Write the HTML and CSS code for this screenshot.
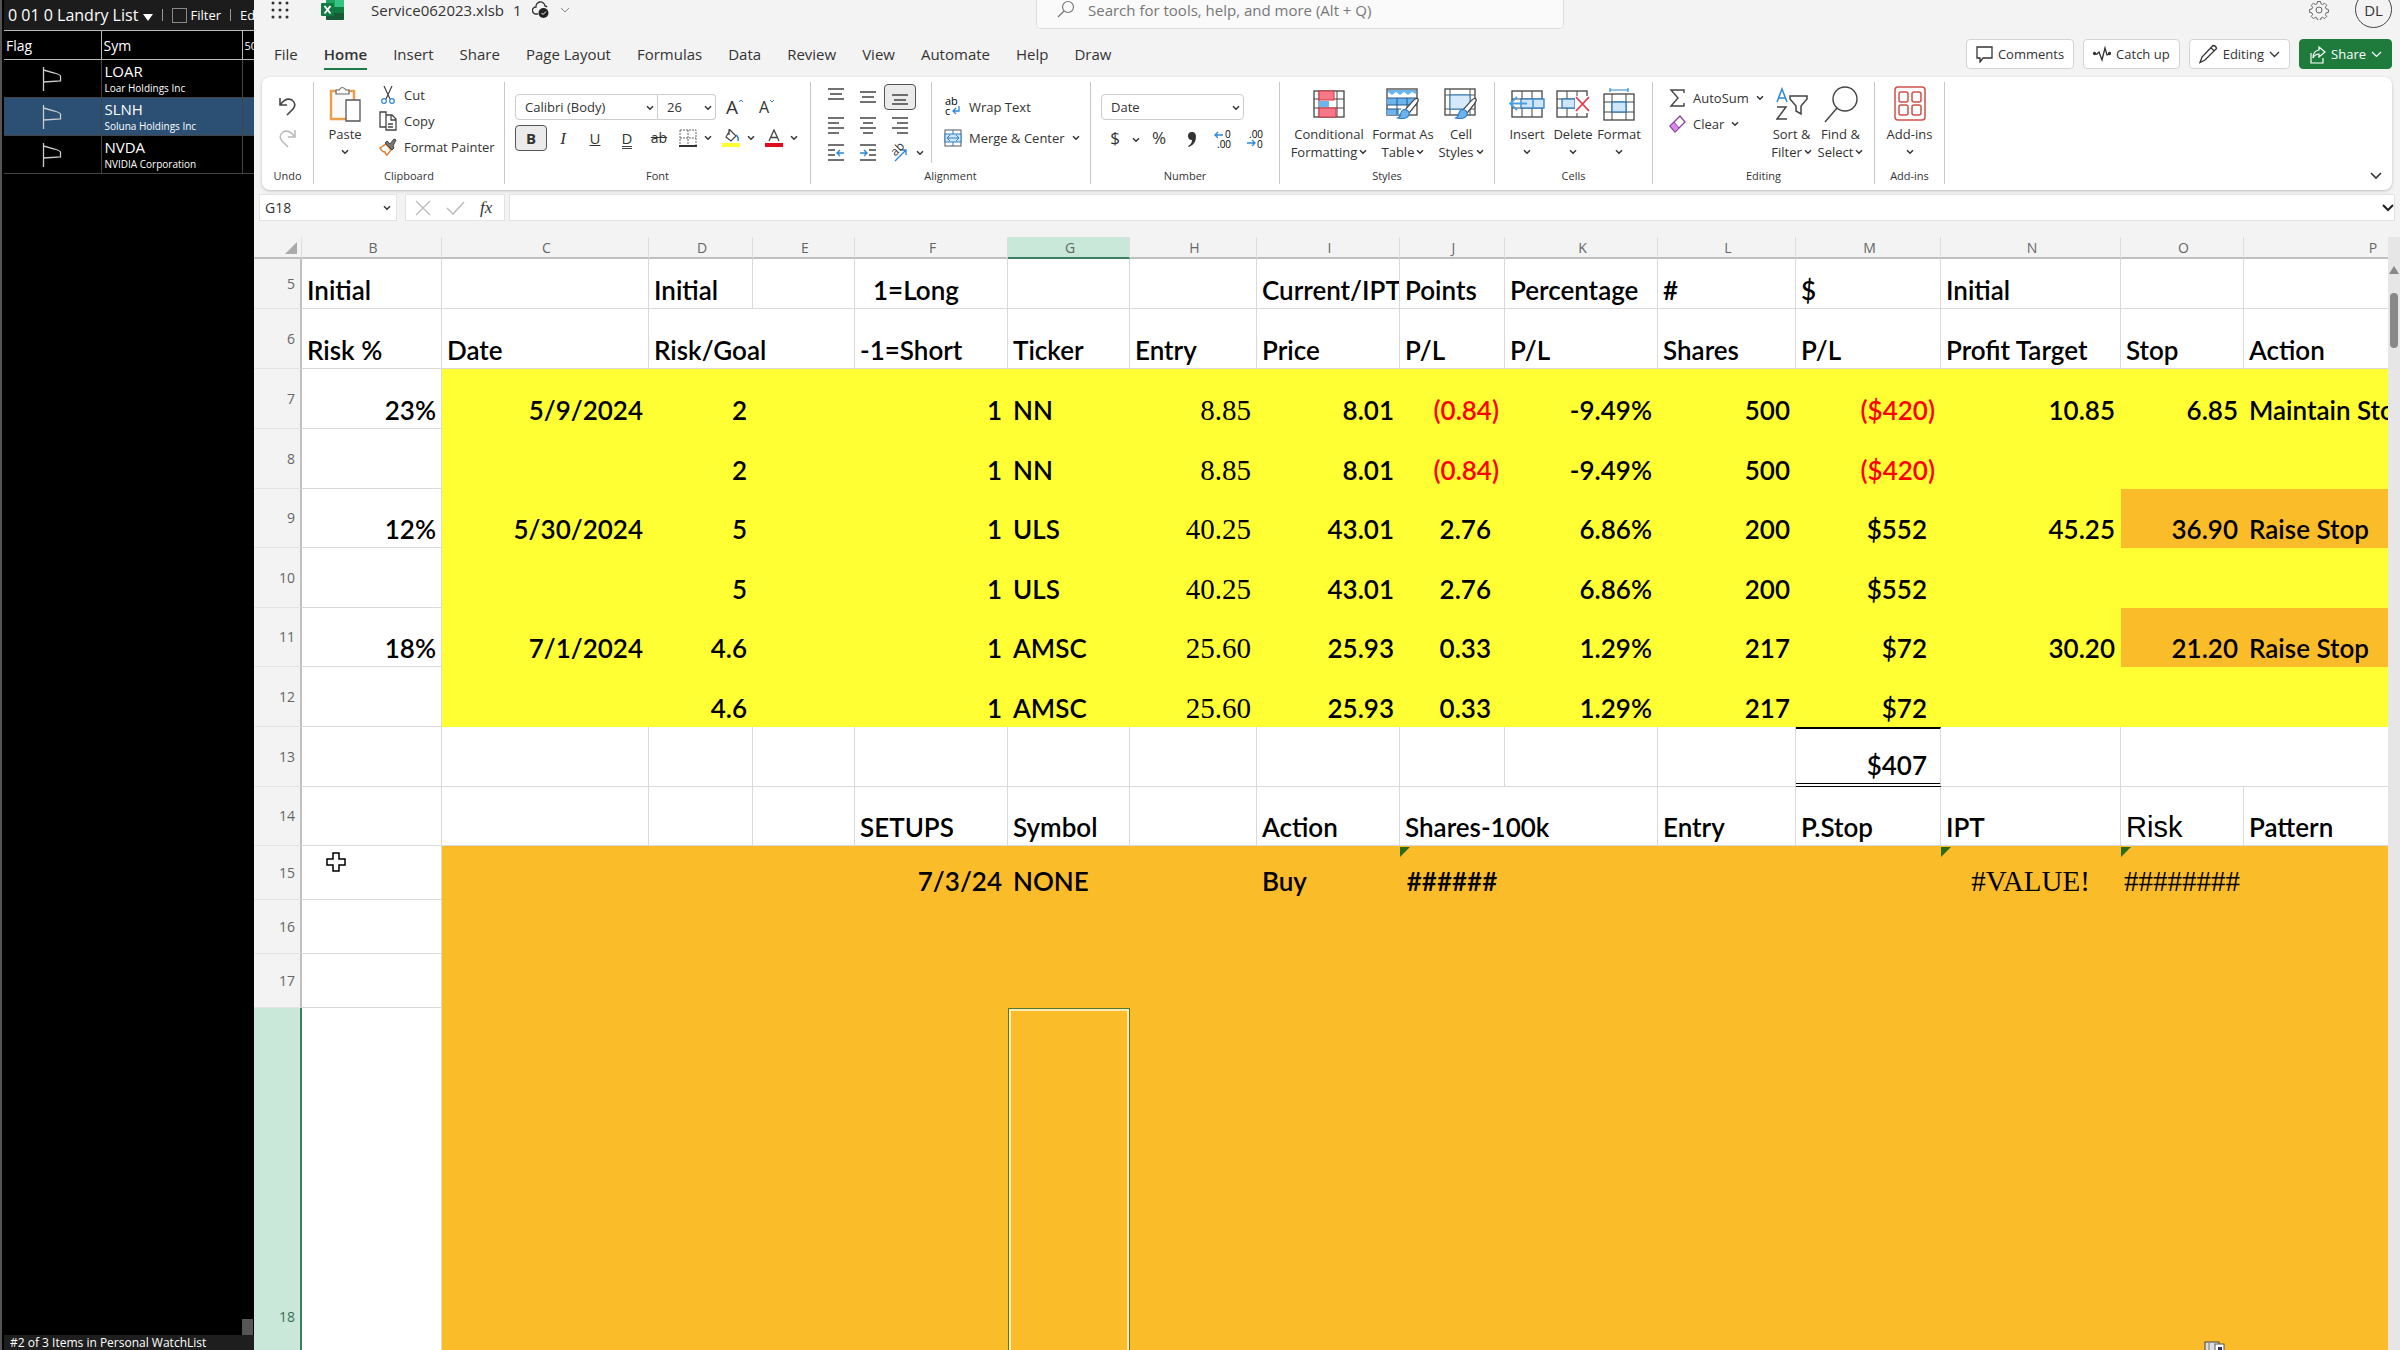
FILE: index.html
```html
<!DOCTYPE html>
<html lang="en">
<head>
    <meta charset="UTF-8">
    <meta name="viewport" content="width=device-width, initial-scale=1.0">
    <title>Service062023.xlsb</title>
    <link rel="stylesheet" href="styles.css">
</head>
<body>
    <!-- shared icons -->
    <svg class="defs">
        <symbol id="chev" viewBox="0 0 8 6"><path d="M1 1.2l3 3 3-3" fill="none" stroke="#333" stroke-width="1.5"/></symbol>
        <symbol id="flag" viewBox="0 0 20 26"><path d="M1.5 1v24M1.5 4l11 3q6 2 6 3v5l-17 1" fill="none" stroke="#ccc" stroke-width="1.3"/></symbol>
        <symbol id="brush" viewBox="0 0 22 22"><path d="M20 1.5q2 1-1 5l-7 9-4-3 8-9q3-3 4-2z" fill="#fff" stroke="#444" stroke-width="1.2"/><path d="M8 12q5 1 4 5-2 5-11 3 3-1 3-4 1-4 4-4z" fill="#6cb4ee" stroke="#2b7bc0"/></symbol>
    </svg>

    <aside class="watch">
        <div class="watch-bar">
            <button class="list-name">0 01 0 Landry List <svg width="10" height="7"><path d="M0 0h10l-5 7z" fill="#fff"/></svg></button>
            <span class="sep"></span>
            <label class="filter"><input type="checkbox"> Filter</label>
            <span class="sep"></span>
            <button>Edit</button>
        </div>
        <table class="watch-table">
            <colgroup><col class="w-flag"><col class="w-sym"><col class="w-fifty"></colgroup>
            <thead>
                <tr><th>Flag</th><th>Sym</th><th class="small">50</th></tr>
            </thead>
            <tbody>
                <tr><td class="flag"><svg><use href="#flag"/></svg></td><td>LOAR<small>Loar Holdings Inc</small></td><td></td></tr>
                <tr class="active"><td class="flag"><svg><use href="#flag"/></svg></td><td>SLNH<small>Soluna Holdings Inc</small></td><td></td></tr>
                <tr><td class="flag"><svg><use href="#flag"/></svg></td><td>NVDA<small>NVIDIA Corporation</small></td><td></td></tr>
            </tbody>
        </table>
        <div class="watch-corner"></div>
        <div class="watch-status">#2 of 3 Items in Personal WatchList</div>
    </aside>

    <main class="excel">
        <header class="title">
            <div class="title-left">
                <svg class="waffle" width="18" height="18" fill="#333"><circle cx="2" cy="2" r="1.5"/><circle cx="9" cy="2" r="1.5"/><circle cx="16" cy="2" r="1.5"/><circle cx="2" cy="9" r="1.5"/><circle cx="9" cy="9" r="1.5"/><circle cx="16" cy="9" r="1.5"/><circle cx="2" cy="16" r="1.5"/><circle cx="9" cy="16" r="1.5"/><circle cx="16" cy="16" r="1.5"/></svg>
                <svg class="logo" width="24" height="22"><rect x="5" y="0" width="18" height="21" rx="2" fill="#21a366"/><rect x="14" y="0" width="9" height="8" fill="#33c481"/><rect x="5" y="8" width="18" height="6" fill="#107c41"/><rect x="5" y="14" width="18" height="7" rx="1" fill="#185c37"/><rect x="0" y="4" width="13" height="13" rx="1" fill="#107c41"/><path d="M3.500 7l6 7.500M9.500 7l-6 7.500" stroke="#fff" stroke-width="2"/></svg>
                <span class="file-name">Service062023.xlsb</span>
                <span>1</span>
                <svg class="cloud" width="18" height="18"><path d="M6 13H4a3.500 3.500 0 0 1 0-7 4.500 4.500 0 0 1 9-1 3 3 0 0 1 2 1" fill="none" stroke="#333" stroke-width="1.3"/><circle cx="11.500" cy="12" r="5" fill="#222"/><path d="M9.500 12l1.500 1.500 3-3" fill="none" stroke="#fff"/></svg>
                <svg width="10" height="6"><path d="M1 1l4 4 4-4" fill="none" stroke="#888"/></svg>
            </div>
            <label class="search">
                <svg width="18" height="18"><circle cx="11" cy="7" r="5.500" fill="none" stroke="#777" stroke-width="1.2"/><path d="M7 11l-6 6" stroke="#777" stroke-width="1.2"/></svg>
                <input type="text" placeholder="Search for tools, help, and more (Alt + Q)">
            </label>
            <div class="title-right">
                <svg width="20" height="20" viewBox="0 0 20 20" fill="none" stroke="#666"><circle cx="10" cy="10" r="3"/><path d="M8.500 1.500h3l.5 2.300 1.600.7 2-1.300 2.100 2.100-1.300 2 .7 1.600 2.300.5v3l-2.300.5-.7 1.600 1.300 2-2.100 2.100-2-1.300-1.600.7-.5 2.300h-3l-.5-2.300-1.600-.7-2 1.300-2.100-2.100 1.300-2-.7-1.600-2.300-.5v-3l2.300-.5.7-1.600-1.300-2 2.100-2.100 2 1.300 1.600-.7z"/></svg>
                <button class="avatar">DL</button>
            </div>
        </header>

        <nav class="tabs">
            <button>File</button>
            <button class="current">Home</button>
            <button>Insert</button>
            <button>Share</button>
            <button>Page Layout</button>
            <button>Formulas</button>
            <button>Data</button>
            <button>Review</button>
            <button>View</button>
            <button>Automate</button>
            <button>Help</button>
            <button>Draw</button>
            <div class="actions">
                <button><svg width="17" height="18" fill="none" stroke="#333" stroke-width="1.300"><path d="M1 2h15v11H7l-3 4v-4H1z"/></svg>Comments</button>
                <button><svg width="18" height="16" fill="none" stroke="#333" stroke-width="1.300"><path d="M1 8h3l2-2 3 8 3-12 2 7 3-1"/><circle cx="1.500" cy="7.500" r="1" fill="#333"/><circle cx="16.500" cy="7.500" r="1" fill="#333"/></svg>Catch up</button>
                <button><svg width="19" height="20" fill="none" stroke="#333" stroke-width="1.300"><path d="M14 1.500q3 0 3.500 3L6 16l-5 2.500L3 13zM12 4l3.500 3"/></svg>Editing<svg width="11" height="7"><path d="M1 1l4.500 4.500L10 1" fill="none" stroke="#333" stroke-width="1.300"/></svg></button>
                <button class="share"><svg width="17" height="19" fill="none" stroke="#fff" stroke-width="1.200"><path d="M2 8v10h12v-5M10 2l6 5-6 5V9q-4 0-6 4 0-7 6-8z"/></svg>Share<svg width="11" height="7"><path d="M1 1l4.500 4.500L10 1" fill="none" stroke="#fff" stroke-width="1.200"/></svg></button>
            </div>
        </nav>

        <section class="ribbon">
            <div class="group g-undo">
                <div class="group-body">
                    <button aria-label="Undo"><svg width="19" height="20" fill="none" stroke="#444" stroke-width="1.600"><path d="M2 2v7h7M2.500 8.500Q8 1 14 4q5 4 1 9l-6 6"/></svg></button>
                    <button aria-label="Redo"><svg width="19" height="20" fill="none" stroke="#bbb" stroke-width="1.500"><path d="M17 2v7h-7M16.500 8.500Q11 1 5 4q-5 4-1 9l6 6"/></svg></button>
                </div>
                <h2>Undo</h2>
            </div>

            <div class="group g-clip">
                <div class="group-body">
                    <button class="big"><span class="ico"><svg width="32" height="36" fill="none"><rect x="2" y="5" width="23" height="28" stroke="#e8a04a" stroke-width="2.500" fill="#fafafa"/><path d="M7 8V4h3q3-5 7 0h3v4z" fill="#fff" stroke="#666" stroke-width="1.200"/><path d="M17 14h14v21H17z" fill="#fff" stroke="#555" stroke-width="1.300"/></svg></span><span>Paste</span><svg class="chev"><use href="#chev"/></svg></button>
                    <div class="list">
                        <button><svg width="18" height="20" fill="none" stroke="#444" stroke-width="1.200"><path d="M5 1l6 13M13 1L7 14"/><circle cx="5" cy="16" r="2.300" stroke="#2b88d8"/><circle cx="13" cy="16" r="2.300" stroke="#2b88d8"/></svg>Cut</button>
                        <button><svg width="18" height="20" fill="none" stroke="#444" stroke-width="1.300"><path d="M7 16H1V1h6v3M7 4h6l4 4v11H7zM12 4v5h5M9 13h5M9 16h5"/></svg>Copy</button>
                        <button><svg width="18" height="18"><path d="M1 10l6-4 5 6-4 5q-2-1-2-3-3 0-5-4z" fill="#fff" stroke="#e07b2c" stroke-width="1.500"/><path d="M6 5l2-2 3 3 4-5 2 1-3 6 1 2-2 2z" fill="#777" stroke="#444"/></svg>Format Painter</button>
                    </div>
                </div>
                <h2>Clipboard</h2>
            </div>

            <div class="group g-font">
                <div class="group-body rows">
                    <div class="row">
                        <span class="select"><select aria-label="Font"><option>Calibri (Body)</option></select><svg class="chev"><use href="#chev"/></svg></span>
                        <span class="select size"><select aria-label="Font size"><option>26</option></select><svg class="chev"><use href="#chev"/></svg></span>
                        <button class="tool grow">A<svg width="6" height="4"><path d="M1 3l2-2 2 2" fill="none" stroke="#2b7bc0"/></svg></button>
                        <button class="tool shrink">A<svg width="6" height="4"><path d="M1 1l2 2 2-2" fill="none" stroke="#2b7bc0"/></svg></button>
                    </div>
                    <div class="row">
                        <button class="tool pressed"><b>B</b></button>
                        <button class="tool"><i>I</i></button>
                        <button class="tool"><u>U</u></button>
                        <button class="tool dbl"><span>D</span></button>
                        <button class="tool strike"><s>ab</s></button>
                        <button class="split first" aria-label="Borders"><svg width="18" height="18" fill="none"><path d="M1 1h16v15M1 1v15M9 1v15M1 9h16" stroke="#666" stroke-dasharray="2 1"/><path d="M0 17h18" stroke="#333" stroke-width="2"/></svg><svg class="chev"><use href="#chev"/></svg></button>
                        <button class="split" aria-label="Fill colour"><svg width="18" height="18"><path d="M8 1l6 6-5 5-5-4zM7 0v6" fill="#fff" stroke="#444" stroke-width="1.200"/><path d="M14 6q3 2 2 6" fill="none" stroke="#2b7bc0" stroke-width="1.500"/><rect y="14" width="18" height="4" fill="#ffff33"/></svg><svg class="chev"><use href="#chev"/></svg></button>
                        <button class="split" aria-label="Font colour"><svg width="18" height="18"><path d="M4 12L9 1l5 11M6 8.500h6" fill="none" stroke="#444" stroke-width="1.300"/><rect y="14" width="18" height="4" fill="#e00b1c"/></svg><svg class="chev"><use href="#chev"/></svg></button>
                    </div>
                </div>
                <h2>Font</h2>
            </div>

            <div class="group g-align">
                <div class="group-body">
                    <div class="align-grid">
                        <button aria-label="Top align"><svg><path d="M1 1h16M3 6h12M1 11h16"/></svg></button>
                        <button aria-label="Middle align"><svg><path d="M1 4h16M3 9h12M1 14h16"/></svg></button>
                        <button aria-label="Bottom align" class="pressed"><svg><path d="M1 7h16M3 12h12M1 16h16"/></svg></button>
                        <button aria-label="Align left"><svg><path d="M1 2h16M1 7h11M1 12h16M1 17h11"/></svg></button>
                        <button aria-label="Center"><svg><path d="M1 2h16M4 7h10M1 12h16M4 17h10"/></svg></button>
                        <button aria-label="Align right"><svg><path d="M1 2h16M6 7h11M1 12h16M6 17h11"/></svg></button>
                        <button aria-label="Decrease indent"><svg><path d="M1 1h16M1 6h7M1 11h7M1 16h16"/><path class="blue" d="M17 9h-7M13 6l-3 3 3 3"/></svg></button>
                        <button aria-label="Increase indent"><svg><path d="M1 1h16M10 6h7M10 11h7M1 16h16"/><path class="blue" d="M1 9h7M5 6l3 3-3 3"/></svg></button>
                        <button aria-label="Orientation" class="orient"><span>ab</span><svg><path class="blue" d="M4 17L15 6M10 6h5v5"/></svg></button>
                    </div>
                    <svg class="chev orient-chev"><use href="#chev"/></svg>
                    <div class="list wrap-list">
                        <button><svg class="glyphs" width="18" height="20"><text x="1" y="8" font-size="11">ab</text><text x="1" y="18" font-size="11">c</text><path d="M15 9v5H9M12 11l-3 3 3 3" fill="none" stroke="#2b88d8" stroke-width="1.300"/></svg>Wrap Text</button>
                        <button><svg width="18" height="18"><rect x="1" y="1" width="16" height="16" fill="#fff" stroke="#555"/><rect x="1" y="5" width="16" height="8" fill="#cfe6fa" stroke="#2b7bc0"/><path d="M3 9h12M6 6L3 9l3 3M12 6l3 3-3 3M9 1v4M9 13v4" fill="none" stroke="#2b7bc0"/></svg>Merge &amp; Center<svg class="chev"><use href="#chev"/></svg></button>
                    </div>
                </div>
                <h2>Alignment</h2>
            </div>

            <div class="group g-num">
                <div class="group-body rows">
                    <div class="row">
                        <span class="select lone"><select aria-label="Number format"><option>Date</option></select><svg class="chev"><use href="#chev"/></svg></span>
                    </div>
                    <div class="row">
                        <button class="tool money">$</button>
                        <button class="caret" aria-label="Currencies"><svg class="chev"><use href="#chev"/></svg></button>
                        <button class="tool">%</button>
                        <button class="tool" aria-label="Comma style"><svg width="9" height="15"><path d="M5 0q4 0 4 5 0 7-7 10l-1-1q4-2 4-6Q1 8 1 4q0-4 4-4z" fill="#333"/></svg></button>
                        <button class="tool" aria-label="Increase decimal"><svg class="glyphs" width="18" height="18"><path d="M9 5H1M4 2L1 5l3 3" fill="none" stroke="#2b88d8" stroke-width="1.300"/><text x="11" y="8" font-size="10">0</text><text x="3" y="18" font-size="10">.00</text></svg></button>
                        <button class="tool" aria-label="Decrease decimal"><svg class="glyphs" width="18" height="18"><path d="M1 13h8M6 10l3 3-3 3" fill="none" stroke="#2b88d8" stroke-width="1.300"/><text x="3" y="8" font-size="10">.00</text><text x="11" y="18" font-size="10">0</text></svg></button>
                    </div>
                </div>
                <h2>Number</h2>
            </div>

            <div class="group g-styles">
                <div class="group-body">
                    <button class="big"><span class="ico"><svg width="32" height="28"><rect x="1" y="1" width="30" height="26" fill="#fff" stroke="#444" stroke-width="1.300"/><path d="M1 9h30M1 18h30M24 1v26M6 1v26" stroke="#444"/><rect x="6" y="1" width="15" height="9" fill="#f8788a" stroke="#d13438"/><rect x="6" y="11" width="10" height="6" fill="#6cb4ee"/><rect x="6" y="18" width="17" height="9" fill="#f8788a" stroke="#d13438"/></svg></span><span>Conditional</span><span>Formatting<svg class="chev"><use href="#chev"/></svg></span></button>
                    <button class="big wide"><span class="ico"><svg width="34" height="32"><rect x="1" y="1" width="30" height="26" fill="#fff" stroke="#444" stroke-width="1.300"/><path d="M2 2h28v4l-4-2-4 3-4-3-4 3-4-3-4 3-4-3z" fill="#6cb4ee"/><path d="M1 10h30v7H1zM1 21h12v6H1z" fill="#6cb4ee"/><path d="M1 10h30M1 17h30M1 21h14M11 10v17M21 10v11" stroke="#24588a"/><svg x="10" y="9" width="24" height="23"><use href="#brush"/></svg></svg></span><span>Format As</span><span>Table<svg class="chev"><use href="#chev"/></svg></span></button>
                    <button class="big cell"><span class="ico"><svg width="34" height="32"><rect x="1" y="1" width="30" height="26" fill="#fff" stroke="#444" stroke-width="1.300"/><path d="M1 7h30M1 21h30M6 1v26M26 1v26" stroke="#555"/><rect x="6" y="7" width="20" height="14" fill="#d5e9fb" stroke="#2b7bc0"/><svg x="10" y="9" width="24" height="23"><use href="#brush"/></svg></svg></span><span>Cell</span><span>Styles<svg class="chev"><use href="#chev"/></svg></span></button>
                </div>
                <h2>Styles</h2>
            </div>

            <div class="group g-cells">
                <div class="group-body">
                    <button class="big"><span class="ico"><svg width="36" height="28"><rect x="3" y="1" width="30" height="26" fill="#fff" stroke="#444" stroke-width="1.300"/><path d="M13 1v26M23 1v26M3 9h30M3 18h30" stroke="#444"/><rect x="12" y="9" width="23" height="9" fill="#cfe6fa" stroke="#2b7bc0" stroke-width="1.300"/><path d="M24 9v9M18 13.500H1M8 7l-7 6.500L8 20" fill="none" stroke="#4aa0e0" stroke-width="1.800"/></svg></span><span>Insert</span><svg class="chev"><use href="#chev"/></svg></button>
                    <button class="big"><span class="ico"><svg width="34" height="28"><rect x="1" y="1" width="30" height="26" fill="#fff" stroke="#444" stroke-width="1.300"/><path d="M11 1v26M21 1v26M1 9h30M1 18h30" stroke="#444"/><rect x="6" y="9" width="13" height="9" fill="#cfe6fa" stroke="#2b7bc0" stroke-width="1.300"/><path d="M19 6h14v17H19z" fill="#fff"/><path d="M20 7l13 14M33 7L20 21" stroke="#e0394f" stroke-width="1.800"/></svg></span><span>Delete</span><svg class="chev"><use href="#chev"/></svg></button>
                    <button class="big"><span class="ico"><svg width="32" height="34"><path d="M7 3h18M7 1v4M25 1v4" stroke="#2b88d8" stroke-width="1.200"/><rect x="1" y="7" width="30" height="26" fill="#fff" stroke="#444" stroke-width="1.300"/><path d="M9 7v26M23 7v26M1 15h30M1 25h30" stroke="#444"/><rect x="9" y="15" width="14" height="10" fill="#cfe6fa" stroke="#2b7bc0" stroke-width="1.300"/></svg></span><span>Format</span><svg class="chev"><use href="#chev"/></svg></button>
                </div>
                <h2>Cells</h2>
            </div>

            <div class="group g-edit">
                <div class="group-body">
                    <div class="list">
                        <button><svg width="17" height="18"><path d="M15 4V1H2l7 8-7 8h13v-3" fill="none" stroke="#444" stroke-width="1.400"/></svg>AutoSum<svg class="chev"><use href="#chev"/></svg></button>
                        <button><svg width="17" height="18"><path d="M1 11L11 1l5 6L6 17z" fill="#fff" stroke="#8a3fa0" stroke-width="1.300"/><path d="M1 11l4-4 5 6-4 4z" fill="#d98ae8" stroke="#8a3fa0"/></svg>Clear<svg class="chev"><use href="#chev"/></svg></button>
                    </div>
                    <button class="big"><span class="ico"><svg width="32" height="34" fill="none" stroke-width="1.500"><path d="M1 15L6 2l5 13M3 11h6" stroke="#2b88d8"/><path d="M1 20h9L1 32h10" stroke="#444"/><path d="M14 9h17v3l-6 7v8l-5-3v-5l-6-7z" stroke="#444"/></svg></span><span>Sort &amp;</span><span>Filter<svg class="chev"><use href="#chev"/></svg></span></button>
                    <button class="big"><span class="ico"><svg width="34" height="38" fill="none" stroke="#444" stroke-width="1.400"><circle cx="21" cy="14" r="12"/><path d="M13 23L1 37"/></svg></span><span>Find &amp;</span><span>Select<svg class="chev"><use href="#chev"/></svg></span></button>
                </div>
                <h2>Editing</h2>
            </div>

            <div class="group g-add">
                <div class="group-body">
                    <button class="big"><span class="ico"><svg width="32" height="36" fill="none" stroke="#d0504a" stroke-width="1.500"><rect x="1" y="1" width="30" height="33" rx="3"/><rect x="5" y="6" width="9" height="10" rx="2"/><rect x="18" y="6" width="9" height="10" rx="2"/><rect x="5" y="19" width="9" height="10" rx="2"/><rect x="18" y="19" width="9" height="10" rx="2"/></svg></span><span>Add-ins</span><svg class="chev"><use href="#chev"/></svg></button>
                </div>
                <h2>Add-ins</h2>
            </div>
            <button class="collapse" aria-label="Collapse ribbon"><svg width="12" height="8"><path d="M1 1l5 5 5-5" fill="none" stroke="#333" stroke-width="1.600"/></svg></button>
        </section>

        <div class="formula">
            <div class="name-box">
                <input type="text" value="G18" aria-label="Name box">
                <svg class="chev"><use href="#chev"/></svg>
            </div>
            <div class="fx-box">
                <svg width="16" height="16"><path d="M1 1l14 14M15 1L1 15" stroke="#bbb" stroke-width="1.300"/></svg>
                <svg width="19" height="14"><path d="M1 7l6 6L18 1" fill="none" stroke="#bbb" stroke-width="1.500"/></svg>
                <i>fx</i>
            </div>
            <div class="formula-input">
                <input type="text" aria-label="Formula">
                <svg width="12" height="8"><path d="M1 1l5 5 5-5" fill="none" stroke="#222" stroke-width="2"/></svg>
            </div>
        </div>

        <div class="sheet">
            <div class="sheet-view">
                <table class="grid">
                    <colgroup>
                        <col class="c-num"><col class="c-b"><col class="c-c"><col class="c-d"><col class="c-e"><col class="c-f"><col class="c-g"><col class="c-h"><col class="c-i"><col class="c-j"><col class="c-k"><col class="c-l"><col class="c-m"><col class="c-n"><col class="c-o"><col class="c-p">
                    </colgroup>
                    <thead>
                        <tr>
                            <th class="corner"><svg width="12" height="12"><path d="M12 0v12H0z" fill="#aaa"/></svg></th>
                            <th>B</th><th>C</th><th>D</th><th>E</th><th>F</th><th class="sel">G</th><th>H</th><th>I</th><th>J</th><th>K</th><th>L</th><th>M</th><th>N</th><th>O</th><th>P</th>
                        </tr>
                    </thead>
                    <tbody>
                        <tr class="r5">
                            <th>5</th><td>Initial</td><td></td><td>Initial</td><td></td><td class="indent">1=Long</td><td></td><td></td><td>Current/IPT</td><td>Points</td><td>Percentage</td><td>#</td><td>$</td><td>Initial</td><td></td><td></td>
                        </tr>
                        <tr>
                            <th>6</th><td>Risk %</td><td>Date</td><td colspan="2">Risk/Goal</td><td>-1=Short</td><td>Ticker</td><td>Entry</td><td>Price</td><td>P/L</td><td>P/L</td><td>Shares</td><td>P/L</td><td>Profit Target</td><td>Stop</td><td>Action</td>
                        </tr>
                        <tr class="open">
                            <th>7</th><td class="num">23%</td><td class="num">5/9/2024</td><td class="num">2</td><td></td><td class="num">1</td><td>NN</td><td class="num serif">8.85</td><td class="num">8.01</td><td class="num neg">(0.84)</td><td class="num">-9.49%</td><td class="num">500</td><td class="num neg">($420)</td><td class="num">10.85</td><td class="num">6.85</td><td>Maintain Stop</td>
                        </tr>
                        <tr class="open">
                            <th>8</th><td></td><td></td><td class="num">2</td><td></td><td class="num">1</td><td>NN</td><td class="num serif">8.85</td><td class="num">8.01</td><td class="num neg">(0.84)</td><td class="num">-9.49%</td><td class="num">500</td><td class="num neg">($420)</td><td></td><td></td><td></td>
                        </tr>
                        <tr class="open short">
                            <th>9</th><td class="num">12%</td><td class="num">5/30/2024</td><td class="num">5</td><td></td><td class="num">1</td><td>ULS</td><td class="num serif">40.25</td><td class="num">43.01</td><td class="num pos">2.76</td><td class="num">6.86%</td><td class="num">200</td><td class="num pos">$552</td><td class="num">45.25</td><td class="num raise">36.90</td><td class="raise">Raise Stop</td>
                        </tr>
                        <tr class="open">
                            <th>10</th><td></td><td></td><td class="num">5</td><td></td><td class="num">1</td><td>ULS</td><td class="num serif">40.25</td><td class="num">43.01</td><td class="num pos">2.76</td><td class="num">6.86%</td><td class="num">200</td><td class="num pos">$552</td><td></td><td></td><td></td>
                        </tr>
                        <tr class="open short">
                            <th>11</th><td class="num">18%</td><td class="num">7/1/2024</td><td class="num">4.6</td><td></td><td class="num">1</td><td>AMSC</td><td class="num serif">25.60</td><td class="num">25.93</td><td class="num pos">0.33</td><td class="num">1.29%</td><td class="num">217</td><td class="num pos">$72</td><td class="num">30.20</td><td class="num raise">21.20</td><td class="raise">Raise Stop</td>
                        </tr>
                        <tr class="open">
                            <th>12</th><td></td><td></td><td class="num">4.6</td><td></td><td class="num">1</td><td>AMSC</td><td class="num serif">25.60</td><td class="num">25.93</td><td class="num pos">0.33</td><td class="num">1.29%</td><td class="num">217</td><td class="num pos">$72</td><td></td><td></td><td></td>
                        </tr>
                        <tr>
                            <th>13</th><td></td><td></td><td></td><td></td><td></td><td></td><td></td><td></td><td></td><td></td><td></td><td class="num pos total">$407</td><td></td><td colspan="2"></td>
                        </tr>
                        <tr class="short">
                            <th>14</th><td></td><td></td><td></td><td></td><td>SETUPS</td><td>Symbol</td><td></td><td>Action</td><td colspan="2">Shares-100k</td><td>Entry</td><td>P.Stop</td><td>IPT</td><td class="arial">Risk</td><td>Pattern</td>
                        </tr>
                        <tr class="setup">
                            <th>15</th><td></td><td></td><td></td><td></td><td class="num">7/3/24</td><td>NONE</td><td></td><td>Buy</td><td class="mid err">######</td><td></td><td></td><td></td><td class="mid err serif">#VALUE!</td><td class="mid err serif">########</td><td></td>
                        </tr>
                        <tr class="setup">
                            <th>16</th><td></td><td></td><td></td><td></td><td></td><td></td><td></td><td></td><td></td><td></td><td></td><td></td><td></td><td></td><td></td>
                        </tr>
                        <tr class="setup">
                            <th>17</th><td></td><td></td><td></td><td></td><td></td><td></td><td></td><td></td><td></td><td></td><td></td><td></td><td></td><td></td><td></td>
                        </tr>
                        <tr class="setup r18">
                            <th class="sel">18</th><td></td><td></td><td></td><td></td><td></td><td class="picked"></td><td></td><td></td><td></td><td></td><td></td><td></td><td></td><td></td><td></td>
                        </tr>
                    </tbody>
                </table>
            </div>
            <div class="scroll">
                <svg width="12" height="10"><path d="M1 9l5-8 5 8z" fill="#888"/></svg>
                <div class="thumb"></div>
            </div>
            <svg class="paste-options" width="21" height="20"><rect x="1" y="1" width="14" height="18" fill="#ddd" stroke="#444"/><path d="M5 2v16" stroke="#777"/><rect x="11" y="3" width="9" height="16" fill="#fff" stroke="#555"/><path d="M14 6h4v4h-4z" fill="#336"/></svg>
            <svg class="cursor" width="20" height="20"><path d="M7 1h6v6h6v6h-6v6H7v-6H1V7h6z" fill="#fff" stroke="#000" stroke-width="1.500"/></svg>
        </div>
    </main>
</body>
</html>
```
FILE: styles.css
```css
* {
    box-sizing: border-box;
}
body {
    margin: 0;
    height: 100vh;
    display: flex;
    overflow: hidden;
    font-family: "Open Sans", "Noto Sans", sans-serif;
    font-size: 13px;
    color: #333;
    background: #f3f3f3;
}
button, input, select {
    font: inherit;
    color: inherit;
    background: none;
    border: none;
    padding: 0;
    margin: 0;
    outline: none;
}
button {
    white-space: nowrap;
}
svg {
    flex: none;
}
.defs {
    position: absolute;
    width: 0;
    height: 0;
}
.chev {
    width: 8px;
    height: 6px;
}
.glyphs {
    overflow: visible;
}

/* watch list */
.watch {
    width: 254px;
    flex: none;
    display: flex;
    flex-direction: column;
    overflow: hidden;
    background: #000;
    color: #fff;
    border-left: 2px solid #555;
    padding-left: 2px;
}
.watch-bar {
    height: 30px;
    flex: none;
    display: flex;
    align-items: center;
    gap: 9px;
    padding-left: 4px;
    background: #1c1c1c;
}
.list-name {
    font-size: 16px;
}
.sep {
    width: 1px;
    height: 12px;
    flex: none;
    background: #999;
}
.filter {
    display: flex;
    align-items: center;
    gap: 4px;
}
.filter input {
    appearance: none;
    width: 15px;
    height: 15px;
    border: 1px solid #888;
}
.watch-table {
    table-layout: fixed;
    width: 290px;
    border-collapse: collapse;
}
.w-flag {
    width: 97px;
}
.w-sym {
    width: 141px;
}
.watch-table th {
    height: 29px;
    padding: 0 2px;
    text-align: left;
    font-size: 14px;
    font-weight: normal;
    border: 1px solid #bbb;
    border-left: none;
}
.watch-table th.small {
    font-size: 11px;
}
.watch-table td {
    height: 38px;
    padding: 1px 3px 0;
    border: 1px solid #444;
    border-left: none;
    line-height: 18px;
    font-size: 15px;
}
.watch-table small {
    display: block;
    font-size: 10px;
    line-height: 16px;
}
.watch-table .flag {
    text-align: center;
}
.flag svg {
    width: 20px;
    height: 26px;
    display: block;
    margin: 0 auto;
}
.active {
    background: #2b5074;
}
.watch-corner {
    width: 11px;
    height: 16px;
    margin: auto 1px 0 auto;
    background: #555;
}
.watch-status {
    height: 15px;
    padding-left: 6px;
    font-size: 12px;
    line-height: 15px;
    background: #1e1e1e;
}

/* title bar */
.excel {
    flex: 1;
    min-width: 0;
    display: flex;
    flex-direction: column;
}
.title {
    height: 29px;
    display: flex;
    justify-content: space-between;
    font-size: 15px;
}
.title-left {
    display: flex;
    align-items: center;
    height: 20px;
    padding-left: 17px;
    width: 782px;
}
.waffle {
    margin-right: 32px;
}
.logo {
    margin-right: 26px;
}
.file-name {
    margin-right: 9px;
}
.cloud {
    margin: 0 10px;
}
.search {
    width: 528px;
    display: flex;
    gap: 13px;
    padding: 0 20px;
    color: #777;
    background: #fafafa;
    border: 1px solid #ddd;
    border-top: none;
    border-radius: 0 0 5px 5px;
}
.search input {
    flex: 1;
    height: 20px;
}
.search input::placeholder {
    color: #777;
}
.title-right {
    flex: 1;
    display: flex;
    justify-content: flex-end;
    gap: 26px;
    padding-right: 8px;
}
.avatar {
    width: 37px;
    height: 37px;
    margin-top: -9px;
    border: 1px solid #444;
    border-radius: 50%;
}

/* ribbon tabs */
.tabs {
    height: 48px;
    display: flex;
    align-items: center;
    gap: 26px;
    padding: 2px 8px 0 20px;
    font-size: 15px;
}
.tabs > button {
    height: 32px;
    padding-top: 2px;
    border-bottom: 2px solid transparent;
}
.tabs .current {
    font-weight: 600;
    border-color: #1e7b45;
}
.actions {
    display: flex;
    gap: 9px;
    margin-left: auto;
    font-size: 13px;
}
.actions button {
    display: flex;
    align-items: center;
    gap: 5px;
    height: 30px;
    padding: 0 9px;
    background: #fff;
    border: 1px solid #d4d4d4;
    border-radius: 4px;
}
.actions .share {
    color: #fff;
    background: #1e7b3c;
    border-color: #1e7b3c;
}

/* ribbon */
.ribbon {
    display: flex;
    height: 113px;
    margin: 0 8px;
    padding: 5px 0 6px;
    background: #fff;
    border-radius: 8px;
    box-shadow: 0 1px 3px #bbb;
}
.group {
    display: flex;
    flex-direction: column;
    border-right: 1px solid #c8c8c8;
}
.group h2 {
    margin: 0;
    font-size: 11px;
    font-weight: normal;
    line-height: 16px;
    text-align: center;
}
.group-body {
    flex: 1;
    display: flex;
}
.g-undo {
    width: 52px;
}
.g-undo .group-body {
    flex-direction: column;
    align-items: center;
    gap: 12px;
    padding-top: 14px;
}
.g-undo button, .g-undo svg {
    display: block;
}
.g-clip {
    width: 191px;
}
.g-font {
    width: 306px;
}
.g-align {
    width: 280px;
}
.g-num {
    width: 189px;
}
.g-styles {
    width: 215px;
}
.g-cells {
    width: 158px;
}
.g-edit {
    width: 222px;
}
.g-add {
    width: 70px;
}
.big {
    display: flex;
    flex-direction: column;
    align-items: center;
    width: 46px;
    line-height: 18px;
}
.big .ico {
    height: 43px;
    display: flex;
    align-items: center;
}
.big > .chev {
    margin-top: 6px;
}
.big span .chev {
    margin: 0 0 2px 2px;
}
.list {
    display: flex;
    flex-direction: column;
}
.list button {
    display: flex;
    align-items: center;
    gap: 7px;
    height: 26px;
}
.g-clip .group-body {
    padding-left: 8px;
    gap: 11px;
}
.rows {
    flex-direction: column;
    gap: 5px;
    padding: 12px 0 0 10px;
}
.row {
    display: flex;
    height: 26px;
}
.select {
    position: relative;
    width: 143px;
    height: 26px;
    border: 1px solid #ccc;
    border-radius: 4px 0 0 4px;
}
.select.lone {
    border-radius: 4px;
}
.select.size {
    width: 58px;
    border-left: none;
    border-radius: 0 4px 4px 0;
    margin-right: 3px;
}
.select select {
    appearance: none;
    width: 100%;
    height: 100%;
    padding-left: 9px;
}
.select .chev {
    position: absolute;
    right: 3px;
    top: 10px;
}
.tool {
    width: 32px;
    height: 26px;
    font-size: 17px;
    line-height: 24px;
}
.tool svg {
    vertical-align: middle;
}
.grow {
    font-size: 19px;
}
.shrink {
    font-size: 16px;
}
.grow svg, .shrink svg {
    vertical-align: top;
    margin-top: 4px;
}
.pressed {
    background: #ebebeb;
    border: 1px solid #555;
    border-radius: 4px;
}
.tool.pressed {
    font-size: 15px;
}
.tool i {
    font-family: "Liberation Serif", serif;
}
.tool u {
    font-size: 15px;
}
.dbl span {
    font-size: 15px;
    border-bottom: 3px double #444;
    line-height: 16px;
    display: inline-block;
}
.strike {
    font-size: 14px;
}
.split {
    display: flex;
    align-items: center;
    gap: 7px;
    width: 43px;
}
.split.first {
    margin-left: 4px;
}
.money {
    width: 28px;
}
.caret {
    width: 14px;
}
.align-grid {
    display: grid;
    grid-template-columns: repeat(3, 32px);
    grid-auto-rows: 26px;
    row-gap: 2px;
    padding: 2px 0 0 9px;
}
.align-grid svg {
    width: 18px;
    height: 18px;
    display: block;
    margin: 0 auto;
    fill: none;
    stroke: #444;
    stroke-width: 1.4;
}
.align-grid .blue {
    stroke: #2b88d8;
}
.orient {
    position: relative;
}
.orient span {
    position: absolute;
    left: 6px;
    top: 0;
    font-size: 12px;
    transform: rotate(-45deg);
}
.orient-chev {
    align-self: flex-end;
    margin: 0 7px 12px 0;
}
.wrap-list {
    height: 81px;
    padding: 9px 0 0 12px;
    border-left: 1px solid #c8c8c8;
}
.wrap-list button {
    height: 31px;
}
.g-styles .group-body, .g-cells .group-body {
    padding-left: 10px;
}
.g-cells .group-body {
    padding-left: 9px;
}
.g-styles .big {
    width: 78px;
}
.g-styles .wide {
    width: 70px;
}
.g-styles .cell {
    width: 46px;
}
.g-edit .list {
    width: 98px;
    padding-top: 3px;
}
.g-edit .group-body {
    padding-left: 16px;
}
.g-edit .big {
    width: 49px;
}
.g-add .group-body {
    justify-content: center;
}
.collapse {
    margin: auto 10px 0 auto;
}

/* formula bar */
.formula {
    display: flex;
    height: 27px;
    margin: 4px 5px 16px;
}
.formula > div {
    display: flex;
    align-items: center;
    background: #fff;
    border: 1px solid #e2e2e2;
}
.name-box {
    width: 138px;
    margin-right: 8px;
    padding: 0 5px;
    font-size: 14px;
}
.name-box input {
    flex: 1;
    min-width: 0;
}
.fx-box {
    width: 100px;
    margin-right: 4px;
    padding-left: 9px;
    gap: 15px;
    font-family: "Liberation Serif", serif;
    font-size: 17px;
}
.formula-input {
    flex: 1;
}
.formula-input input {
    flex: 1;
}

/* sheet */
.sheet {
    position: relative;
    flex: 1;
    min-height: 0;
    display: flex;
}
.sheet-view {
    flex: 1;
    min-width: 0;
    overflow: hidden;
}
.grid {
    table-layout: fixed;
    width: 2246px;
    border-collapse: separate;
    border-spacing: 0;
    background: #fff;
    color: #000;
    font-family: Lato, Carlito, sans-serif;
    font-size: 26px;
    font-weight: 600;
}
.c-num { width: 48px; }
.c-b { width: 140px; }
.c-c { width: 207px; }
.c-d { width: 104px; }
.c-e { width: 102px; }
.c-f { width: 153px; }
.c-g { width: 122px; }
.c-h { width: 127px; }
.c-i { width: 143px; }
.c-j { width: 105px; }
.c-k { width: 153px; }
.c-l { width: 138px; }
.c-m { width: 145px; }
.c-n { width: 180px; }
.c-o { width: 123px; }
.c-p { width: 256px; }
.grid th {
    padding: 0;
    background: #f3f3f3;
    color: #666;
    font-family: "Open Sans", sans-serif;
    font-size: 14px;
    font-weight: normal;
    line-height: 18px;
    border-right: 1px solid #ddd;
    border-bottom: 1px solid #e4e4e4;
}
.grid thead th {
    height: 22px;
    padding: 2px 0 0 3px;
    border-bottom: 2px solid #c0c0c0;
}
.grid thead .sel {
    background: #c9e8d9;
    border-bottom-color: #3b7f60;
}
.grid .corner {
    text-align: right;
    padding-right: 4px;
}
.corner svg {
    display: block;
    margin-left: auto;
}
.grid tbody th {
    text-align: right;
    padding-right: 5px;
    border-right: 2px solid #c0c0c0;
}
.grid tbody .sel {
    background: #c9e8d9;
    color: #3b6f58;
    border-right-color: #3b7f60;
}
.grid td {
    height: 60px;
    padding: 0 5px 2px;
    vertical-align: bottom;
    line-height: 32px;
    white-space: nowrap;
    overflow: hidden;
    border-right: 1px solid #d9d9d9;
    border-bottom: 1px solid #d9d9d9;
}
.grid .r5 td {
    height: 50px;
}
.grid .short td {
    height: 59px;
}
.grid .indent {
    padding-left: 18px;
}
.grid .num {
    text-align: right;
}
.grid .pos {
    padding-right: 13px;
}
.grid .neg {
    color: #f00;
}
.grid .mid {
    text-align: center;
    padding-left: 0;
    padding-right: 0;
}
.grid .serif {
    font-family: "Liberation Serif", serif;
    font-size: 29px;
    font-weight: normal;
}
.grid .arial {
    font-family: "Liberation Sans", sans-serif;
    font-size: 29px;
    font-weight: normal;
}
.open td:nth-child(n+3) {
    background: #ffff33;
    border-color: #ffff33;
}
.open td.raise {
    background: #fbbc2a;
    border-color: #fbbc2a;
}
.grid .total {
    border-top: 2px solid #000;
    border-bottom: 4px double #000;
}
.setup td {
    height: 54px;
}
.setup td:nth-child(n+3) {
    background: #fbbc2a;
    border-color: #fbbc2a;
}
.err {
    position: relative;
}
/* green error corner */
.err::before {
    content: "";
    position: absolute;
    left: 0;
    top: 1px;
    border-top: 10px solid #2a6a1a;
    border-right: 10px solid transparent;
}
.r18 td {
    height: 618px;
}
.setup td.picked {
    border: 1px solid #4f7a2a;
    box-shadow: inset 0 0 0 2px #fbe9b8;
}
.scroll {
    width: 12px;
    flex: none;
    padding-top: 28px;
    background: #e6e6e6;
}
.scroll svg {
    display: block;
}
.thumb {
    width: 8px;
    height: 55px;
    margin: 18px 0 0 2px;
    border-radius: 4px;
    background: #888;
}
.cursor {
    position: absolute;
    left: 72px;
    top: 615px;
}
.paste-options {
    position: absolute;
    right: 175px;
    bottom: -11px;
}
```
